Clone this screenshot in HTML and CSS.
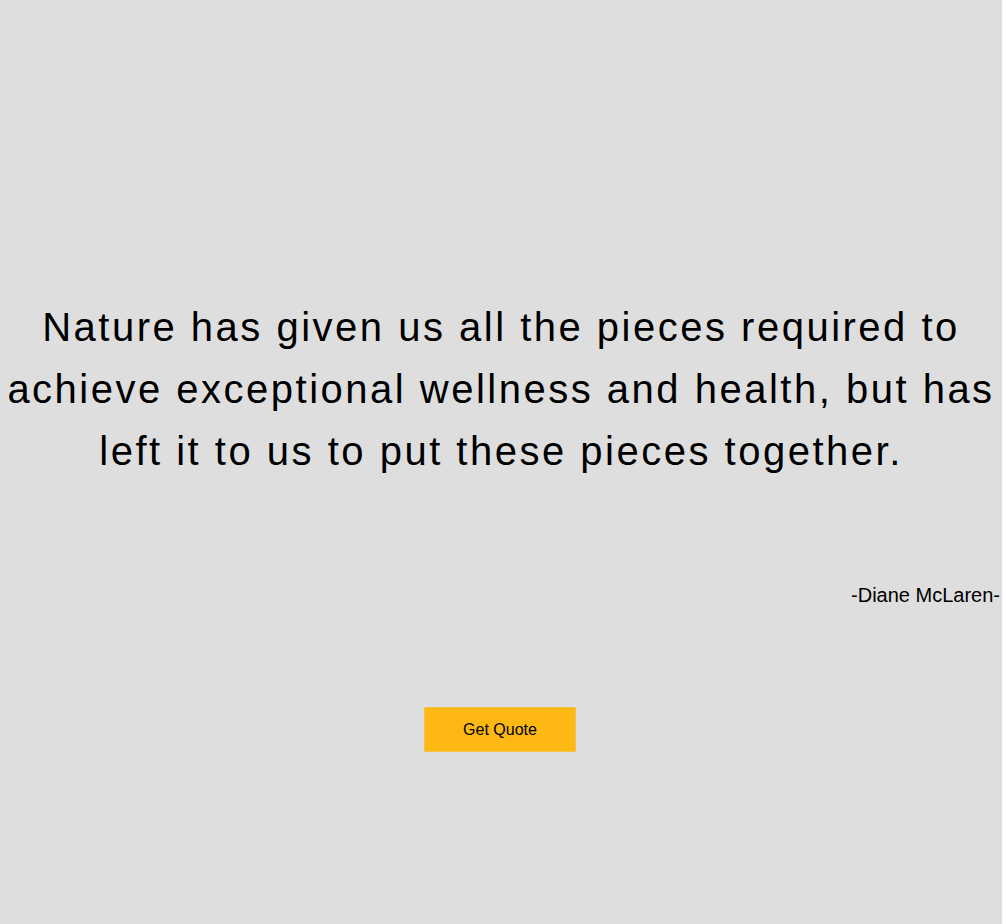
FILE: index.html
```html
<!DOCTYPE html>
<html lang="en">
<head>
<meta charset="utf-8">
<title>Quote</title>
<link rel="stylesheet" href="styles.css">
</head>
<body>
<main class="page">
  <section class="quote-section">
    <p class="quote">Nature has given us all the pieces required to achieve exceptional wellness and health, but has left it to us to put these pieces together.</p>
    <p class="author">-Diane McLaren-</p>
    <div class="actions">
      <button class="btn-quote" type="button">Get Quote</button>
    </div>
  </section>
</main>
</body>
</html>
```
FILE: styles.css
```css
html, body {
  margin: 0;
  padding: 0;
  background: #ffffff;
}
.page {
  width: calc(100% - 4px);
  min-height: 924px;
  background: #dedede;
  font-family: "Liberation Sans", Arial, sans-serif;
  color: #000;
  display: flex;
  flex-direction: column;
}
.quote-section {
  padding-top: 296px;
  display: flex;
  flex-direction: column;
}
.quote {
  margin: 0;
  font-size: 40px;
  line-height: 62px;
  letter-spacing: 2.5px;
  text-align: center;
}
.author {
  margin: 102px 2px 0 0;
  font-size: 20px;
  text-align: right;
}
.actions {
  display: flex;
  justify-content: center;
  margin-top: 100px;
  padding-right: 2px;
}
.btn-quote {
  width: 152px;
  height: 45px;
  background: #fdb813;
  border: 1px solid #f2c34a;
  font-family: "Liberation Sans", Arial, sans-serif;
  font-size: 16px;
  color: #000;
  padding: 0;
  cursor: pointer;
}
```
